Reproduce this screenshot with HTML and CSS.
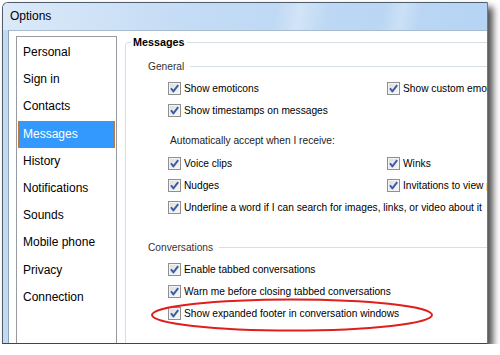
FILE: index.html
```html
<!DOCTYPE html>
<html lang="en">
<head>
    <meta charset="UTF-8" />
    <meta name="viewport" content="width=device-width, initial-scale=1.0" />
    <title>Options</title>
    <link rel="stylesheet" href="styles.css">
</head>
<body>
    <svg class="defs" width="0" height="0">
        <symbol id="tick" viewBox="0 0 11 11">
            <path d="M2 5.2 L4.4 8.4 L9.2 2.2" fill="none" stroke="#3a5aa3" stroke-width="1.9" stroke-linejoin="round" />
        </symbol>
    </svg>

    <div class="window">
        <div class="titlebar">Options</div>
        <div class="frame">
            <div class="client">
                <ul class="nav">
                    <li>Personal</li>
                    <li>Sign in</li>
                    <li>Contacts</li>
                    <li class="selected">Messages</li>
                    <li>History</li>
                    <li>Notifications</li>
                    <li>Sounds</li>
                    <li>Mobile phone</li>
                    <li>Privacy</li>
                    <li>Connection</li>
                </ul>

                <fieldset class="group">
                    <legend>Messages</legend>
                    <div class="group-body">
                        <div class="section">General</div>
                        <div class="options">
                            <label class="check"><span class="box"><svg><use href="#tick" /></svg></span>Show emoticons</label>
                            <label class="check"><span class="box"><svg><use href="#tick" /></svg></span>Show custom emoticons</label>
                            <label class="check wide"><span class="box"><svg><use href="#tick" /></svg></span>Show timestamps on messages</label>
                        </div>

                        <div class="caption">Automatically accept when I receive:</div>
                        <div class="options">
                            <label class="check"><span class="box"><svg><use href="#tick" /></svg></span>Voice clips</label>
                            <label class="check"><span class="box"><svg><use href="#tick" /></svg></span>Winks</label>
                            <label class="check"><span class="box"><svg><use href="#tick" /></svg></span>Nudges</label>
                            <label class="check"><span class="box"><svg><use href="#tick" /></svg></span>Invitations to view photos</label>
                            <label class="check wide"><span class="box"><svg><use href="#tick" /></svg></span>Underline a word if I can search for images, links, or video about it</label>
                        </div>

                        <div class="section section-gap">Conversations</div>
                        <div class="options">
                            <label class="check wide"><span class="box"><svg><use href="#tick" /></svg></span>Enable tabbed conversations</label>
                            <label class="check wide"><span class="box"><svg><use href="#tick" /></svg></span>Warn me before closing tabbed conversations</label>
                            <label class="check wide"><span class="box"><svg><use href="#tick" /></svg></span>Show expanded footer in conversation windows</label>
                        </div>
                    </div>
                </fieldset>
            </div>
        </div>

        <svg class="circle" width="288" height="38" viewBox="0 0 288 38">
            <ellipse cx="144" cy="19" rx="140" ry="15.5" fill="none" stroke="#e01e1e" stroke-width="2" />
        </svg>
    </div>
</body>
</html>
```

FILE: styles.css
```css
body {
    margin: 0;
    background-color: #fff;
    font-family: "Liberation Sans", Arial, sans-serif;
    color: #000;
}

.defs {
    position: absolute;
}

.window {
    position: relative;
    box-sizing: border-box;
    width: 486px;
    height: 342px;
    margin: 2px 0 0 2px;
    border: 1px solid #4e5c6b;
    border-right-color: #777;
    border-bottom-color: #444;
    border-radius: 6px 0 0 0;
    display: flex;
    flex-direction: column;
    overflow: hidden;
    box-shadow: 5px 5px 7px rgba(0, 0, 0, 0.7);
}

.titlebar {
    flex: none;
    height: 27px;
    line-height: 27px;
    padding-left: 7px;
    font-size: 12px;
    background:
        linear-gradient(100deg, rgba(255, 255, 255, 0) 56%, rgba(255, 255, 255, 0.3) 61%, rgba(255, 255, 255, 0) 67%,
            rgba(255, 255, 255, 0) 78%, rgba(255, 255, 255, 0.25) 82%, rgba(255, 255, 255, 0) 86%),
        linear-gradient(to right, #dbe9f8, #c3dbf5 40%, #b6d4f3);
}

.frame {
    flex: 1;
    min-height: 0;
    display: flex;
    padding-left: 5px;
    background-color: #c3daf2;
}

.client {
    flex: 1;
    display: flex;
    align-items: flex-start;
    padding: 3px 0 0 7px;
    border-left: 1px solid #8ca2b9;
    border-top: 1px solid #a9bccf;
    background-color: #fff;
    overflow: hidden;
}

/* left navigation */
.nav {
    flex: none;
    box-sizing: border-box;
    width: 101px;
    height: 330px;
    margin: 2px 0 0 0;
    padding: 2px 1px 0 1px;
    list-style: none;
    border: 1px solid #979aa0;
    font-size: 12px;
}

.nav li {
    box-sizing: border-box;
    height: 27.2px;
    line-height: 27px;
    padding-left: 5px;
    white-space: nowrap;
}

.nav li.selected {
    background-color: #3399ff;
    color: #fff;
    border: 1px solid #b77a45;
    line-height: 25px;
    padding-left: 4px;
}

/* group box */
.group {
    flex: 1;
    min-width: 0;
    margin: 0 -40px 0 8px;
    padding: 0 0 40px 5px;
    border: 1px solid #d5dfe5;
    border-radius: 3px;
}

.group legend {
    padding: 0 2px;
    line-height: 16px;
    font-size: 10.8px;
    font-weight: bold;
}

.group-body {
    padding: 5px 0 0 17px;
    font-size: 10.2px;
}

.section {
    display: flex;
    align-items: center;
    height: 22px;
    color: #333;
    white-space: nowrap;
}

.section::after {
    content: "";
    flex: 1;
    height: 1px;
    margin-left: 6px;
    background-color: #d5dfe5;
}

.section-gap {
    margin-top: 18px;
}

.caption {
    height: 22px;
    line-height: 22px;
    margin-top: 9px;
    padding-left: 22px;
    color: #222;
    white-space: nowrap;
}

.options {
    display: grid;
    grid-template-columns: 219px 1fr;
    grid-auto-rows: 22px;
    padding-left: 20px;
}

.check {
    display: flex;
    align-items: center;
    white-space: nowrap;
}

.check.wide {
    grid-column: 1 / -1;
}

.box {
    flex: none;
    box-sizing: border-box;
    width: 13px;
    height: 13px;
    margin-right: 3px;
    border: 1px solid #8e8f8f;
    background: linear-gradient(135deg, #dcdcdc, #f9f9f9);
    box-shadow: inset 0 0 0 1px #f4f4f4;
}

.box svg {
    display: block;
    width: 11px;
    height: 11px;
}

/* red mark around the last option */
.circle {
    position: absolute;
    left: 145px;
    top: 293px;
}
```
